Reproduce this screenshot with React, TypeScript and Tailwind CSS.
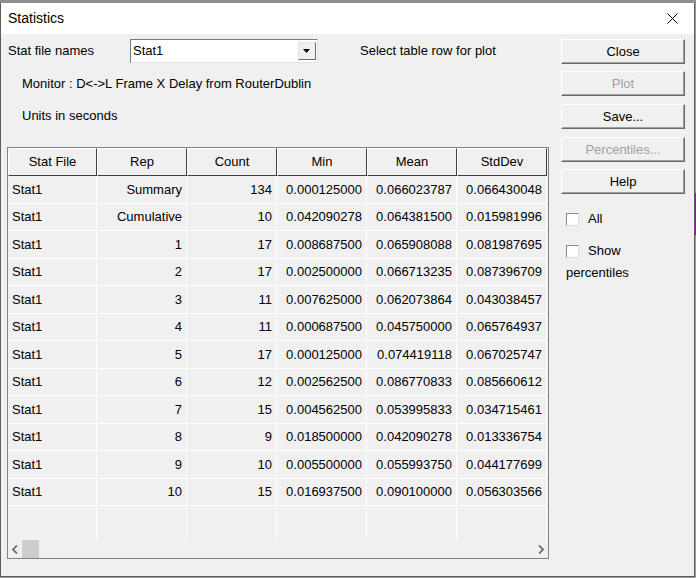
import React from 'react';

const rows = [
  ['Stat1', 'Summary', '134', '0.000125000', '0.066023787', '0.066430048'],
  ['Stat1', 'Cumulative', '10', '0.042090278', '0.064381500', '0.015981996'],
  ['Stat1', '1', '17', '0.008687500', '0.065908088', '0.081987695'],
  ['Stat1', '2', '17', '0.002500000', '0.066713235', '0.087396709'],
  ['Stat1', '3', '11', '0.007625000', '0.062073864', '0.043038457'],
  ['Stat1', '4', '11', '0.000687500', '0.045750000', '0.065764937'],
  ['Stat1', '5', '17', '0.000125000', '0.074419118', '0.067025747'],
  ['Stat1', '6', '12', '0.002562500', '0.086770833', '0.085660612'],
  ['Stat1', '7', '15', '0.004562500', '0.053995833', '0.034715461'],
  ['Stat1', '8', '9', '0.018500000', '0.042090278', '0.013336754'],
  ['Stat1', '9', '10', '0.005500000', '0.055993750', '0.044177699'],
  ['Stat1', '10', '15', '0.016937500', '0.090100000', '0.056303566'],
];

const headers = ['Stat File', 'Rep', 'Count', 'Min', 'Mean', 'StdDev'];

const WinButton = ({ label, disabled }: { label: string; disabled?: boolean }) => (
  <div className="w-[124px] h-[25px] bg-[#f0f0f0] border border-t-white border-l-white border-b-[#696969] border-r-[#696969] shadow-[inset_-1px_-1px_0_#a0a0a0]">
    <div className={`h-full flex items-center justify-center text-[13px] ${disabled ? 'text-[#a0a0a0]' : 'text-black'}`}>{label}</div>
  </div>
);

const Checkbox = () => <div className="w-[13px] h-[13px] bg-white border border-[#8a8a8a] border-b-[#dcdcdc] border-r-[#dcdcdc]" />;

export default function App() {
  return (
    <div className="w-[696px] h-[578px] bg-[#9c9c9c] overflow-hidden" style={{ fontFamily: '"Liberation Sans", Arial, sans-serif' }}>
      <div className="h-[3px] bg-[#8f8f8f]" />
      <div className="flex">
        <div className="w-[695px] h-[574px] border-l border-r border-b border-[#5c5c5c] bg-[#f0f0f0] flex flex-col">
          {/* title bar */}
          <div className="h-[31px] bg-white flex items-center justify-between pl-[7px] pr-[16px]">
            <span className="text-[14px] text-black">Statistics</span>
            <svg width="11" height="11" viewBox="0 0 11 11">
              <path d="M0.5 0.5 L10.5 10.5 M10.5 0.5 L0.5 10.5" stroke="#000" strokeWidth="1" />
            </svg>
          </div>

          <div className="flex pt-[5px] text-[13px] text-black">
            {/* left column */}
            <div className="w-[553px] pl-[6px] flex flex-col">
              <div className="h-[24px] flex items-center">
                <span className="w-[123px] pl-[1px]">Stat file names</span>
                <div className="w-[188px] h-[24px] bg-white border border-[#7a7a7a] border-b-[#e3e3e3] border-r-[#e3e3e3] flex items-center">
                  <span className="flex-1 pl-[2px]">Stat1</span>
                  <div className="w-[18px] h-[18px] mr-[1px] bg-[#f0f0f0] border border-t-[#e3e3e3] border-l-[#e3e3e3] border-b-[#696969] border-r-[#696969] flex items-center justify-center">
                    <svg width="8" height="4" viewBox="0 0 8 4">
                      <path d="M0 0 H7 L3.5 4 Z" fill="#000" />
                    </svg>
                  </div>
                </div>
                <span className="ml-[42px]">Select table row for plot</span>
              </div>
              <div className="h-[20px] mt-[11px] pl-[15px] flex items-center">Monitor : D&lt;-&gt;L Frame X Delay from RouterDublin</div>
              <div className="h-[20px] mt-[12px] pl-[15px] flex items-center">Units in seconds</div>

              <div className="mt-[21px] w-[542px] h-[412px] border border-[#828282] flex flex-col overflow-hidden">
                <div className="flex h-[28px]">
                  {headers.map((h, j) => (
                    <div key={h} className={`${j === 0 ? 'w-[89px]' : 'w-[90px]'} h-full border border-t-white border-l-white border-b-[#404040] border-r-[#404040] flex items-center justify-center`}>
                      {h}
                    </div>
                  ))}
                </div>
                {rows.map((r, i) => (
                  <div key={i} className="flex h-[27.5px]">
                    {r.map((c, j) => (
                      <div key={j} className={`${j === 0 ? 'w-[89px]' : 'w-[90px]'} h-full border-b border-r border-white flex items-center px-[4px] ${j === 0 ? 'justify-start' : 'justify-end'}`}>
                        {c}
                      </div>
                    ))}
                  </div>
                ))}
                <div className="flex flex-1">
                  {headers.map((h, j) => (
                    <div key={h} className={`${j === 0 ? 'w-[89px]' : 'w-[90px]'} h-full border-r border-white`} />
                  ))}
                </div>
                <div className="h-[18px] flex items-center">
                  <div className="w-[14px] flex justify-center">
                    <svg width="6" height="9" viewBox="0 0 6 9">
                      <path d="M5 0.5 L1 4.5 L5 8.5" stroke="#606060" strokeWidth="1.6" fill="none" />
                    </svg>
                  </div>
                  <div className="w-[17px] h-[18px] bg-[#cdcdcd]" />
                  <div className="flex-1" />
                  <div className="w-[15px] flex justify-center">
                    <svg width="6" height="9" viewBox="0 0 6 9">
                      <path d="M1 0.5 L5 4.5 L1 8.5" stroke="#606060" strokeWidth="1.6" fill="none" />
                    </svg>
                  </div>
                </div>
              </div>
            </div>

            {/* right column */}
            <div className="pl-[7px] flex flex-col">
              <WinButton label="Close" />
              <div className="mt-[7px]"><WinButton label="Plot" disabled /></div>
              <div className="mt-[8px]"><WinButton label="Save..." /></div>
              <div className="mt-[8px]"><WinButton label="Percentiles..." disabled /></div>
              <div className="mt-[7px]"><WinButton label="Help" /></div>
              <div className="mt-[18px] pl-[5px] flex items-center h-[14px]">
                <Checkbox />
                <span className="ml-[9px]">All</span>
              </div>
              <div className="mt-[18px] pl-[5px] flex items-center h-[14px]">
                <Checkbox />
                <span className="ml-[9px]">Show</span>
              </div>
              <div className="pl-[5px] mt-[5px]">percentiles</div>
            </div>
          </div>
        </div>
        <div className="w-[1px] flex flex-col">
          <div className="h-[190px]" />
          <div className="h-[42px] bg-[#b000b8]" />
        </div>
      </div>
    </div>
  );
}
